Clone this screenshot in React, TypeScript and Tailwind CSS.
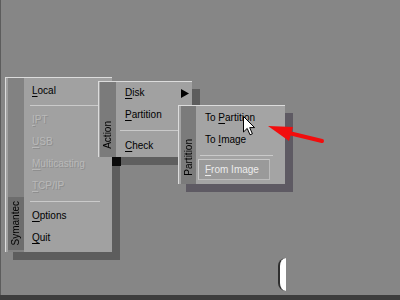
const font = { fontFamily: '"Liberation Sans", Arial, sans-serif' };

const Item = ({ label, rest, disabled }: { label: string; rest: string; disabled?: boolean }) => (
  <div
    className={`h-[22px] flex items-center pl-[8px] text-[10px] leading-none ${
      disabled ? "text-[#b9b9b9] [text-shadow:1px_1px_0_#8e8e8e]" : "text-black"
    }`}
  >
    <u className="underline-offset-[2px]">{label}</u>
    {rest}
  </div>
);

const Side = ({ text }: { text: string }) => (
  <span className="[writing-mode:vertical-rl] rotate-180 text-[10px] leading-none text-black">{text}</span>
);

export default function App() {
  return (
    <div className="relative w-[400px] h-[300px] overflow-hidden bg-[#868686]" style={font}>
      <div className="absolute left-0 top-0 w-px h-[296px] bg-[#5c5c5c]" />

      {/* main menu shadow */}
      <div className="absolute left-[13px] top-[85px] w-[107px] h-[175px] bg-[#5d5d5d]" />

      {/* main menu */}
      <div className="absolute left-[5px] top-[77px] w-[107px] h-[175px] bg-[#a1a1a1] border-t border-l border-[#dcdcdc] flex pl-[2px]">
        <div className="w-[16px] h-full bg-[#828282] flex flex-col justify-end pb-[2px]">
          <div className="h-[53px] bg-[#6d6d6d] flex items-center justify-center">
            <Side text="Symantec" />
          </div>
        </div>
        <div className="flex-1 flex flex-col pt-[2px]">
          <Item label="L" rest="ocal" />
          <div className="h-[7px] flex items-center">
            <div className="h-px flex-1 ml-[6px] mr-[12px] bg-[#cacaca]" />
          </div>
          <Item label="I" rest="PT" disabled />
          <Item label="U" rest="SB" disabled />
          <Item label="M" rest="ulticasting" disabled />
          <Item label="T" rest="CP/IP" disabled />
          <div className="h-[8px] flex items-center">
            <div className="h-px flex-1 ml-[6px] mr-[12px] bg-[#cacaca]" />
          </div>
          <Item label="O" rest="ptions" />
          <Item label="Q" rest="uit" />
        </div>
      </div>

      {/* action menu shadow */}
      <div className="absolute left-[192px] top-[89px] w-[8px] h-[76px] bg-[#5d5d5d]" />
      <div className="absolute left-[112px] top-[157px] w-[88px] h-[8px] bg-[#5f5f5f]" />
      <div className="absolute left-[112px] top-[157px] w-[9px] h-[9px] bg-[#0a0a0a]" />

      {/* action menu */}
      <div className="absolute left-[98px] top-[81px] w-[94px] h-[76px] bg-[#a1a1a1] border-t border-l border-[#dcdcdc] flex pl-[1px]">
        <div className="w-[16px] h-full bg-[#7b7b7b] flex flex-col justify-end items-center pb-[8px]">
          <Side text="Action" />
        </div>
        <div className="flex-1 flex flex-col">
          <div className="h-[22px] flex items-center justify-between pl-[9px] pr-[3px] text-[10px] leading-none text-black">
            <span>
              <u className="underline-offset-[2px]">D</u>isk
            </span>
            <svg width="8" height="9" viewBox="0 0 8 9">
              <polygon points="0,0 8,4.5 0,9" fill="#000" />
            </svg>
          </div>
          <div className="h-[22px] flex items-center pl-[9px] text-[10px] leading-none text-black">
            <u className="underline-offset-[2px]">P</u>artition
          </div>
          <div className="h-[9px] flex items-center">
            <div className="h-px flex-1 ml-[4px] bg-[#cacaca]" />
          </div>
          <div className="h-[22px] flex items-center pl-[9px] text-[10px] leading-none text-black">
            <u className="underline-offset-[2px]">C</u>heck
          </div>
        </div>
      </div>

      {/* partition menu shadow */}
      <div className="absolute left-[186px] top-[113px] w-[107px] h-[79px] bg-[#5e5a63]" />

      {/* partition menu */}
      <div className="absolute left-[178px] top-[105px] w-[107px] h-[79px] bg-[#a4a4a4] border-t border-l border-[#dcdcdc] flex pl-[2px]">
        <div className="w-[15px] h-full bg-[#7b7b7b] flex flex-col justify-end items-center pb-[8px]">
          <Side text="Partition" />
        </div>
        <div className="flex-1 flex flex-col pt-[1px]">
          <div className="h-[22px] flex items-center pl-[9px] text-[10px] leading-none text-black">
            To&nbsp;<u className="underline-offset-[2px]">P</u>artition
          </div>
          <div className="h-[22px] flex items-center pl-[9px] text-[10px] leading-none text-black">
            To&nbsp;<u className="underline-offset-[2px]">I</u>mage
          </div>
          <div className="h-[8px] flex items-center">
            <div className="h-px ml-[4px] w-[73px] bg-[#cacaca]" />
          </div>
          <div className="ml-[2px] w-[72px] h-[21px] border border-t-[#c8c8c8] border-l-[#c8c8c8] border-r-[#bcbcbc] border-b-[#bcbcbc] bg-[#9a9a9a] flex items-center pl-[6px] text-[10px] leading-none text-[#ececec]">
            <u className="underline-offset-[2px]">F</u>rom&nbsp;Image
          </div>
        </div>
      </div>

      {/* mouse cursor */}
      <svg className="absolute left-[243px] top-[116px]" width="13" height="20" viewBox="0 0 13 20">
        <path d="M0.5 0.5 L0.5 16 L4.2 12.4 L7 18.8 L9.4 17.8 L6.7 11.6 L11.6 11.6 Z" fill="#fff" stroke="#000" strokeWidth="1" />
      </svg>

      {/* red arrow */}
      <svg className="absolute left-[265px] top-[122px]" width="62" height="24" viewBox="0 0 62 24">
        <polygon points="3,4 28,5 24,19" fill="#f20d0d" />
        <line x1="24" y1="11" x2="57" y2="19" stroke="#f20d0d" strokeWidth="4" strokeLinecap="round" />
      </svg>

      {/* partial white shape at bottom */}
      <div className="absolute left-[278px] top-[258px] w-[8px] h-[33px] bg-white rounded-l-full border-l-2 border-[#2e2e2e]" />

      {/* bottom dark strip */}
      <div className="absolute left-0 bottom-0 w-full h-[5px] bg-[#3d3d3d]" />
    </div>
  );
}
